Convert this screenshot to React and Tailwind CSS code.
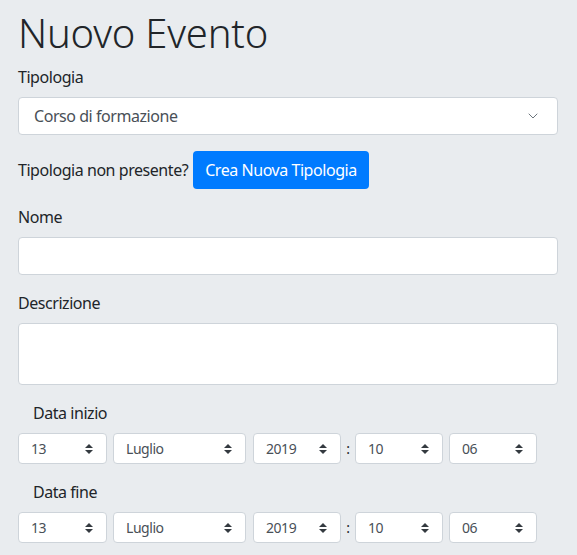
import { ChevronDown } from "lucide-react";

const font = { fontFamily: '"Noto Sans", "Open Sans", Arial, sans-serif' };

function Arrows() {
  return (
    <svg viewBox="0 0 4 5" className="h-[10px] w-[8px]" fill="#343a40">
      <path d="M2 0L0 2h4zm0 5L0 3h4z" />
    </svg>
  );
}

function SmallSelect({ value, width }) {
  return (
    <div
      className={`flex h-[31px] items-center justify-between rounded border border-[#ced4da] bg-white pl-3 pr-[13px] text-[14px] text-[#495057] ${width}`}
    >
      <span>{value}</span>
      <Arrows />
    </div>
  );
}

function DateRow({ label }) {
  return (
    <div className="mb-4">
      <p className="mb-2 pl-[15px] leading-6">{label}</p>
      <div className="flex items-center">
        <SmallSelect value="13" width="w-[89px]" />
        <div className="ml-[6px]">
          <SmallSelect value="Luglio" width="w-[133px]" />
        </div>
        <div className="ml-[7px]">
          <SmallSelect value="2019" width="w-[88px]" />
        </div>
        <span className="mx-[4px] w-[6px] text-center text-[14px] leading-none">:</span>
        <SmallSelect value="10" width="w-[88px]" />
        <div className="ml-[6px]">
          <SmallSelect value="06" width="w-[88px]" />
        </div>
      </div>
    </div>
  );
}

export default function App() {
  return (
    <div className="min-h-screen bg-[#e9ecef] text-[#212529] tracking-[-0.45px]" style={font}>
      <div className="w-[540px] pl-[18px] pt-[9px] box-content">
        <h1 className="mb-2 text-[40px] font-light leading-[48px] tracking-[-0.2px]">Nuovo Evento</h1>

        <div className="mb-4">
          <p className="mb-2 leading-6">Tipologia</p>
          <div className="flex h-[38px] items-center justify-between rounded border border-[#ced4da] bg-white pl-[15px] pr-4 text-[#495057]">
            <span>Corso di formazione</span>
            <ChevronDown className="h-4 w-4 text-[#6c757d]" strokeWidth={1.5} />
          </div>
        </div>

        <div className="mb-4 flex items-center">
          <span>Tipologia non presente?</span>
          <button
            type="button"
            className="ml-[5px] h-[38px] rounded bg-[#007bff] px-3 text-white"
          >
            Crea Nuova Tipologia
          </button>
        </div>

        <div className="mb-4">
          <p className="mb-2 leading-6">Nome</p>
          <div className="h-[38px] rounded border border-[#ced4da] bg-white" />
        </div>

        <div className="mb-4">
          <p className="mb-2 leading-6">Descrizione</p>
          <div className="h-[62px] rounded border border-[#ced4da] bg-white" />
        </div>

        <DateRow label="Data inizio" />
        <DateRow label="Data fine" />
      </div>
    </div>
  );
}
